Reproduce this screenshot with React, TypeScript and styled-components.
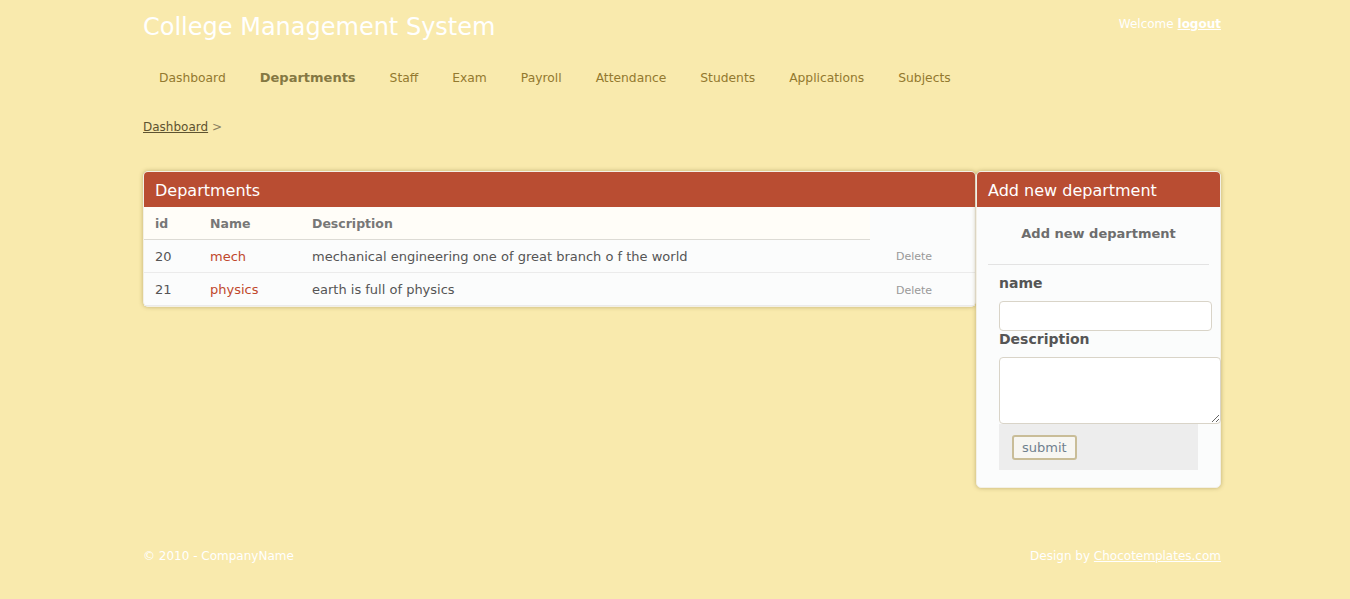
import React from 'react';
import styled, { createGlobalStyle } from 'styled-components';

const GlobalStyle = createGlobalStyle`
  html, body {
    margin: 0;
    padding: 0;
    background: #f9eaad;
    font-family: "DejaVu Sans", Verdana, sans-serif;
  }
`;

const Page = styled.div`
  width: 1078px;
  margin-left: 143px;
  min-height: 599px;
  display: flex;
  flex-direction: column;
`;

const Header = styled.header`
  display: flex;
  justify-content: space-between;
  align-items: flex-start;
  padding-top: 12px;
  height: 45px;
`;

const Title = styled.h1`
  margin: 0;
  font-size: 24px;
  font-weight: normal;
  line-height: 30px;
  color: #ffffff;
`;

const Welcome = styled.div`
  font-size: 12px;
  line-height: 24px;
  color: #ffffff;

  a {
    color: #ffffff;
    font-weight: bold;
    text-decoration: underline;
  }
`;

const Nav = styled.ul`
  list-style: none;
  margin: 0;
  padding: 0;
  display: flex;
  height: 40px;
  align-items: baseline;
  line-height: 42px;
`;

const NavItem = styled.li<{ $active?: boolean }>`
  padding: 0 18px 0 16px;
  font-size: ${p => (p.$active ? '13px' : '12.3px')};
  color: ${p => (p.$active ? '#857842' : '#93792f')};
  font-weight: ${p => (p.$active ? 'bold' : 'normal')};
`;

const Crumbs = styled.div`
  margin-top: 21px;
  font-size: 12px;
  line-height: 18px;
  color: #8c8060;

  a {
    color: #5e5330;
    text-decoration: underline;
  }
`;

const Columns = styled.div`
  display: flex;
  align-items: flex-start;
  margin-top: 35px;
`;

const Panel = styled.section<{ $width: number }>`
  box-sizing: border-box;
  width: ${p => p.$width}px;
  flex-shrink: 0;
  background: #fbfcfc;
  border: 1px solid #f3f0e6;
  border-radius: 5px;
  box-shadow: 0 0 4px rgba(120, 100, 40, 0.45);
`;

const PanelHead = styled.h2`
  margin: 0;
  height: 35px;
  padding: 0 11px;
  background: #b94d32;
  border-radius: 4px 4px 0 0;
  color: #ffffff;
  font-size: 16px;
  font-weight: normal;
  line-height: 37px;
`;

const Table = styled.table`
  width: 100%;
  border-collapse: collapse;
  font-size: 13px;
  color: #555555;
`;

const Th = styled.th<{ $plain?: boolean }>`
  text-align: left;
  height: 32px;
  padding: 0 0 0 11px;
  font-size: 12.5px;
  color: #777777;
  background: ${p => (p.$plain ? 'transparent' : '#fffdf8')};
  border-bottom: ${p => (p.$plain ? 'none' : '1px solid #dddbd5')};
`;

const Td = styled.td<{ $pad?: number }>`
  height: 32px;
  padding: 0 0 0 ${p => p.$pad ?? 11}px;
  border-bottom: 1px solid #ebebeb;
`;

const NameLink = styled.a`
  color: #c0482c;
  text-decoration: none;
`;

const DeleteLink = styled.a`
  font-size: 11px;
  color: #999999;
  text-decoration: none;
`;

const FormBody = styled.div`
  padding: 0 11px 17px;
`;

const FormTitle = styled.h3`
  margin: 0;
  padding: 19px 0 23px;
  text-align: center;
  font-size: 13px;
  color: #6d6d6d;
  border-bottom: 1px solid #e3e3e3;
`;

const Fields = styled.div`
  padding: 9px 0 0 11px;
`;

const Label = styled.label<{ $gap: number }>`
  display: block;
  font-size: 14px;
  font-weight: bold;
  color: #555555;
  line-height: 18px;
  margin-bottom: ${p => p.$gap}px;
`;

const Input = styled.input`
  display: block;
  box-sizing: border-box;
  width: 213px;
  height: 30px;
  border: 1px solid #d9d4c8;
  border-radius: 4px;
  background: #ffffff;
  margin: 0 0 -1px;
`;

const TextArea = styled.textarea`
  display: block;
  box-sizing: border-box;
  width: 222px;
  height: 67px;
  border: 1px solid #d9d4c8;
  border-radius: 4px;
  background: #ffffff;
  margin: 0;
`;

const SubmitBar = styled.div`
  width: 199px;
  height: 46px;
  box-sizing: border-box;
  padding: 11px 0 0 13px;
  background: #ededed;
`;

const Button = styled.button`
  height: 25px;
  padding: 0 8px;
  background: #f7f6f2;
  border: 2px solid #c9bd98;
  border-radius: 3px;
  font-family: inherit;
  font-size: 13px;
  color: #70808e;
`;

const Footer = styled.footer`
  display: flex;
  justify-content: space-between;
  margin-top: 61px;
  font-size: 12px;
  color: #ffffff;

  a {
    color: #ffffff;
    text-decoration: underline;
  }
`;

const rows = [
  { id: 20, name: 'mech', description: 'mechanical engineering one of great branch o f the world' },
  { id: 21, name: 'physics', description: 'earth is full of physics' },
];

const navItems = ['Dashboard', 'Departments', 'Staff', 'Exam', 'Payroll', 'Attendance', 'Students', 'Applications', 'Subjects'];

export default function App() {
  return (
    <>
      <GlobalStyle />
      <Page>
        <Header>
          <Title>College Management System</Title>
          <Welcome>
            Welcome <a href="#">logout</a>
          </Welcome>
        </Header>

        <Nav>
          {navItems.map(item => (
            <NavItem key={item} $active={item === 'Departments'}>
              {item}
            </NavItem>
          ))}
        </Nav>

        <Crumbs>
          <a href="#">Dashboard</a> &gt;
        </Crumbs>

        <Columns>
          <Panel $width={833}>
            <PanelHead>Departments</PanelHead>
            <Table>
              <colgroup>
                <col style={{ width: 55 }} />
                <col style={{ width: 102 }} />
                <col style={{ width: 569 }} />
                <col />
              </colgroup>
              <thead>
                <tr>
                  <Th>id</Th>
                  <Th>Name</Th>
                  <Th>Description</Th>
                  <Th $plain />
                </tr>
              </thead>
              <tbody>
                {rows.map(r => (
                  <tr key={r.id}>
                    <Td>{r.id}</Td>
                    <Td>
                      <NameLink href="#">{r.name}</NameLink>
                    </Td>
                    <Td>{r.description}</Td>
                    <Td $pad={26}>
                      <DeleteLink href="#">Delete</DeleteLink>
                    </Td>
                  </tr>
                ))}
              </tbody>
            </Table>
          </Panel>

          <Panel $width={245}>
            <PanelHead>Add new department</PanelHead>
            <FormBody>
              <FormTitle>Add new department</FormTitle>
              <Fields>
                <Label $gap={9}>name</Label>
                <Input type="text" />
                <Label $gap={9}>Description</Label>
                <TextArea />
                <SubmitBar>
                  <Button type="button">submit</Button>
                </SubmitBar>
              </Fields>
            </FormBody>
          </Panel>
        </Columns>

        <Footer>
          <span>© 2010 - CompanyName</span>
          <span>
            Design by <a href="#">Chocotemplates.com</a>
          </span>
        </Footer>
      </Page>
    </>
  );
}
